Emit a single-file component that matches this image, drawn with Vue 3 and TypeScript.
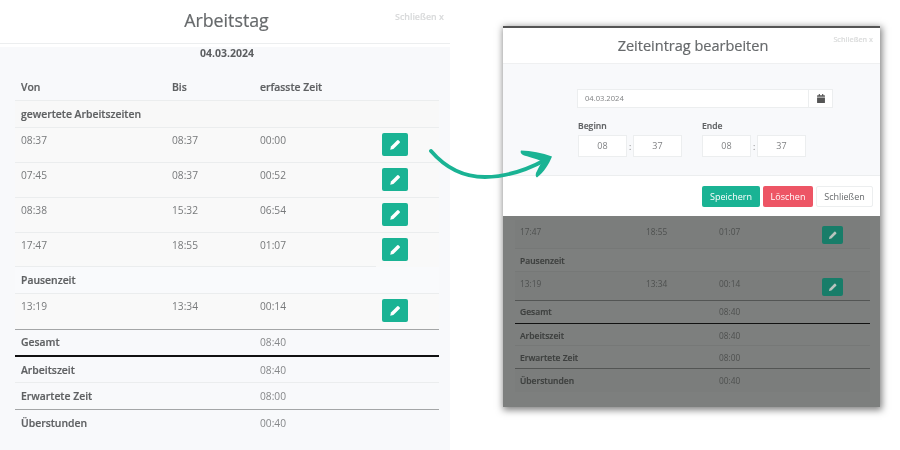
<script setup lang="ts">
interface Row { kind: string; a?: string; b?: string; c?: string; edit?: boolean }
const rows: Row[] = [
  { kind: 'label sec', a: 'gewertete Arbeitszeiten' },
  { kind: 'time', a: '08:37', b: '08:37', c: '00:00', edit: true },
  { kind: 'time', a: '07:45', b: '08:37', c: '00:52', edit: true },
  { kind: 'time', a: '08:38', b: '15:32', c: '06:54', edit: true },
  { kind: 'time last', a: '17:47', b: '18:55', c: '01:07', edit: true },
  { kind: 'label sec plain', a: 'Pausenzeit' },
  { kind: 'time gray', a: '13:19', b: '13:34', c: '00:14', edit: true },
  { kind: 'sum black', a: 'Gesamt', c: '08:40' },
  { kind: 'sum', a: 'Arbeitszeit', c: '08:40' },
  { kind: 'sum gray', a: 'Erwartete Zeit', c: '08:00' },
  { kind: 'sum end', a: 'Überstunden', c: '00:40' },
]
const dimRows = rows.slice(4)
const pencil = 'M1.500 14.500l.9-3.900L10.200 2.800a1.100 1.100 0 0 1 1.500 0l1.500 1.500a1.100 1.100 0 0 1 0 1.500L5.400 13.600z'
</script>

<template>
  <div class="page">
    <section class="panel">
      <header class="head">
        <h1>Arbeitstag</h1>
        <span class="close">Schließen x</span>
      </header>
      <div class="body">
        <div class="date">04.03.2024</div>
        <div class="table">
          <div class="row thead">
            <span>Von</span><span>Bis</span><span>erfasste Zeit</span><span></span>
          </div>
          <div v-for="(r, i) in rows" :key="i" class="row" :class="r.kind">
            <span>{{ r.a }}</span>
            <span>{{ r.b }}</span>
            <span>{{ r.c }}</span>
            <span class="act">
              <button v-if="r.edit" class="edit" type="button">
                <svg viewBox="0 0 16 16" width="13" height="13"><path :d="pencil" fill="#fff" /></svg>
              </button>
            </span>
          </div>
        </div>
      </div>
    </section>

    <section class="stage">
      <div class="modal">
        <header class="mhead">
          <h2>Zeiteintrag bearbeiten</h2>
          <span class="mclose">Schließen x</span>
        </header>
        <div class="mbody">
          <div class="form">
            <div class="dateinput">
              <span class="dval">04.03.2024</span>
              <span class="addon">
                <svg viewBox="0 0 14 16" width="8" height="9">
                  <path d="M3 0h2v2h4V0h2v2h2a1 1 0 0 1 1 1v2H0V3a1 1 0 0 1 1-1h2zM0 6h14v9a1 1 0 0 1-1 1H1a1 1 0 0 1-1-1z" fill="#555" />
                </svg>
              </span>
            </div>
            <div class="times">
              <div class="tgroup">
                <label>Beginn</label>
                <div class="tline"><span class="tbox">08</span><i>:</i><span class="tbox">37</span></div>
              </div>
              <div class="tgroup">
                <label>Ende</label>
                <div class="tline"><span class="tbox">08</span><i>:</i><span class="tbox">37</span></div>
              </div>
            </div>
          </div>
        </div>
        <footer class="mfoot">
          <button class="btn save" type="button">Speichern</button>
          <button class="btn del" type="button">Löschen</button>
          <button class="btn shut" type="button">Schließen</button>
        </footer>
        <div class="dim">
          <div class="dtable">
            <div v-for="(r, i) in dimRows" :key="i" class="drow" :class="r.kind">
              <span>{{ r.a }}</span>
              <span>{{ r.b }}</span>
              <span>{{ r.c }}</span>
              <span class="dact">
                <button v-if="r.edit" class="dedit" type="button">
                  <svg viewBox="0 0 16 16" width="10" height="10"><path :d="pencil" fill="#b9c4bf" /></svg>
                </button>
              </span>
            </div>
          </div>
        </div>
      </div>
    </section>

    <svg class="arrow" viewBox="0 0 130 34" width="130" height="34">
      <path d="M2 2C14 16 30 28 56 28C80 28 100 20 118 10" fill="none" stroke="#1ab394" stroke-width="3.8" stroke-linecap="round" />
      <path d="M92 1.500C102 2 113 3.500 123 7.500C120 15 115 23 108 28.500C106.500 28 106.500 26 107 24C109 20 111 16 113 12.500C106 9 99 8 94 6C92 5 91 3 92 1.500Z" fill="#1ab394" />
    </svg>
  </div>
</template>

<style>
html, body { margin: 0; background: #fff; }
</style>

<style scoped>
.page {
  position: relative;
  display: flex;
  width: 900px;
  height: 450px;
  overflow: hidden;
  background: #fff;
  font-family: "Open Sans", "Liberation Sans", sans-serif;
  color: #676a6c;
  filter: blur(0.35px);
}
.panel { width: 450px; display: flex; flex-direction: column; }
.head {
  position: relative;
  height: 44px;
  box-sizing: border-box;
  border-bottom: 1px solid #eceeef;
  display: flex;
  align-items: center;
  justify-content: center;
}
h1 { margin: 0 0 2px 3px; font-size: 17.800px; font-weight: 500; color: #676a6c; line-height: 1; -webkit-text-stroke: .2px #676a6c; }
.close {
  position: absolute;
  top: 10px;
  left: 395px;
  font-size: 8.900px;
  font-weight: 600;
  color: #d9dadb;
  -webkit-text-stroke: .15px #d9dadb;
}
.body {
  flex: 1;
  margin-top: 3px;
  background: #f8f9fb;
  padding: 0 11px 0 15px;
}
.date {
  height: 12px;
  padding-bottom: 15px;
  line-height: 13px;
  font-size: 10.500px;
  font-weight: 700;
  text-align: center;
  color: #5c5e60;
}
.table { width: 424px; }
.row {
  display: grid;
  grid-template-columns: 151px 88px 122px 63px;
  box-sizing: border-box;
  border-bottom: 1px solid #ebedee;
  font-size: 10.200px;
  line-height: 13px;
}
.row > span:not(.act) { padding-left: 6px; }
.thead { height: 27px; font-weight: 600; font-size: 10.400px; align-items: center; color: #5f6163; -webkit-text-stroke: .2px #5f6163; }
.thead span { padding-top: 1px; }
.sec { height: 27px; align-items: center; background: #f8f8f8; }
.sec > span:first-child { font-weight: 600; font-size: 10.400px; color: #5f6163; white-space: nowrap; padding-top: 1px; -webkit-text-stroke: .2px #5f6163; }
.plain { background: #f9fafc; }
.time { height: 35px; background: #f9f9f9; color: #77797b; }
.time > span:not(.act) { padding-top: 6px; }
.last { height: 34px; border-bottom-color: transparent; position: relative; }
.last::after {
  content: "";
  position: absolute;
  left: 0;
  right: 63px;
  bottom: -1px;
  border-bottom: 1px solid #ebedee;
}
.gray { height: 36px; border-bottom: 1px solid #a4a6a7; }
.sum { height: 26px; padding-top: 1px; align-items: center; color: #86888a; }
.sum > span:first-child { font-weight: 600; font-size: 10.400px; color: #5f6163; -webkit-text-stroke: .2px #5f6163; }
.black { height: 27px; padding-top: 0; border-bottom: 2px solid #111; }
.end { height: 27px; padding: 0 0 1px; border-bottom: 0; }
.sum.gray { height: 27px; padding-top: 0; border-bottom: 1px solid #a4a6a7; }
.act { padding: 5px 0 0 6px; }
.edit, .dedit {
  display: flex;
  align-items: center;
  justify-content: center;
  padding: 0;
  border: 0;
  background: #1ab394;
}
.edit { width: 26px; height: 23px; border-radius: 2px; }

.stage { flex: 1; padding: 26px 20px 0 53px; }
.modal {
  width: 377px;
  height: 381px;
  display: flex;
  flex-direction: column;
  box-shadow: 1px 2px 7px 1px rgba(0, 0, 0, .5);
}
.mhead {
  position: relative;
  height: 37px;
  box-sizing: border-box;
  border-top: 2px solid #555;
  display: flex;
  align-items: center;
  justify-content: center;
  background: #fff;
}
h2 { margin: 1px 0 0 3px; font-size: 14.500px; font-weight: 500; color: #676a6c; line-height: 1; -webkit-text-stroke: .2px #676a6c; }
.mclose {
  position: absolute;
  top: 6px;
  right: 7px;
  font-size: 7.200px;
  font-weight: 600;
  color: #dcdddd;
  -webkit-text-stroke: .15px #dcdddd;
}
.mbody {
  height: 113px;
  box-sizing: border-box;
  background: #f8f9fb;
  border-top: 1px solid #eff0f1;
  border-bottom: 1px solid #eceeef;
  padding: 25px 0 0 74px;
}
.form { width: 256px; }
.dateinput {
  display: flex;
  width: 256px;
  height: 19px;
  box-sizing: border-box;
  border: 1px solid #eceeef;
  background: #fff;
  font-size: 7.600px;
  color: #808284;
}
.dval { flex: 1; padding-left: 7px; line-height: 17px; }
.addon {
  width: 23px;
  border-left: 1px solid #eceeef;
  display: flex;
  align-items: center;
  justify-content: center;
}
.times { display: flex; gap: 19px; margin-top: 13px; padding-left: 1px; }
.tgroup { width: 105px; }
.tgroup label { display: block; font-size: 8.600px; font-weight: 600; color: #5f6163; line-height: 11px; margin-bottom: 3px; -webkit-text-stroke: .15px #5f6163; }
.tline { display: flex; align-items: center; }
.tline i { width: 6px; text-align: center; font-style: normal; font-size: 8.500px; color: #777; }
.tbox {
  width: 49px;
  height: 22px;
  box-sizing: border-box;
  border: 1px solid #eceeef;
  background: #fff;
  text-align: center;
  font-size: 9px;
  line-height: 20px;
  color: #808284;
}
.mfoot {
  height: 40px;
  box-sizing: border-box;
  background: #fff;
  display: flex;
  justify-content: flex-end;
  gap: 3px;
  padding: 10px 7px 0 0;
}
.btn {
  height: 21px;
  padding: 0;
  border-radius: 2px;
  border: 1px solid transparent;
  font-family: inherit;
  font-size: 9px;
  color: #fff;
}
.save { width: 58px; background: #1ab394; }
.del { width: 50px; background: #ed5565; }
.shut { width: 57px; background: #fff; border-color: #eceeef; color: #676a6c; }
.dim {
  flex: 1;
  background: #7d7f7e;
  padding: 4px 10px 0 12px;
}
.dtable { width: 355px; }
.drow {
  display: grid;
  grid-template-columns: 126px 73px 103px 53px;
  box-sizing: border-box;
  font-size: 8.300px;
  line-height: 11px;
  color: #4e504f;
  border-bottom: 1px solid #767877;
}
.drow > span:not(.dact) { padding-left: 5px; }
.drow.time { height: 30px; padding-top: 0; background: #7b7d7c; color: #4e504f; }
.drow.time > span:not(.dact) { padding-top: 6px; }
.drow.last { height: 29px; }
.drow.last::after { right: 53px; border-bottom-color: #767877; }
.drow.sec { height: 23px; background: #7d7f7e; }
.drow.sec > span:first-child, .drow.sum > span:first-child { font-weight: 600; font-size: 8.500px; color: #3e403f; -webkit-text-stroke: .2px #3e403f; }
.drow.sum { height: 22px; padding-top: 1px; align-items: center; color: #4e504f; }
.drow.sum.gray { height: 23px; padding-top: 0; border-bottom: 1px solid #535554; }
.drow.time.gray { height: 29px; border-bottom: 1px solid #535554; }
.drow.sum.black { height: 23px; padding: 0 0 1px; border-bottom: 1px solid #111; }
.drow.sum.end { height: 23px; padding-top: 0; border-bottom: 0; background: #7b7d7c; }
.dact { padding: 5px 0 0 5px; }
.dedit { width: 21px; height: 18px; border-radius: 2px; background: #187d69; }

.arrow { position: absolute; left: 429px; top: 149px; }
</style>
